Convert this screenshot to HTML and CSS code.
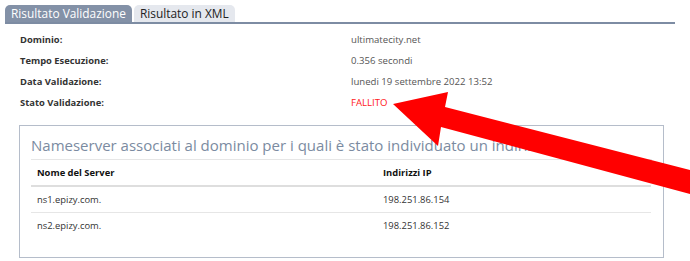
FILE: index.html
```html
<!DOCTYPE html>
<html lang="it">
<head>
<meta charset="utf-8">
<link rel="stylesheet" href="styles.css">
</head>
<body>
<div class="page">
  <div class="tabs">
    <div class="tab active">Risultato Validazione</div>
    <div class="tab">Risultato in XML</div>
  </div>
  <div class="info">
    <div class="label">Dominio:</div><div class="value">ultimatecity.net</div>
    <div class="label">Tempo Esecuzione:</div><div class="value">0.356 secondi</div>
    <div class="label">Data Validazione:</div><div class="value">lunedi 19 settembre 2022 13:52</div>
    <div class="label">Stato Validazione:</div><div class="value fail">FALLITO</div>
  </div>
  <div class="box">
    <h2 class="box-title">Nameserver associati al dominio per i quali è stato individuato un indirizzo IP</h2>
    <table class="ns">
      <thead><tr><th class="c1">Nome del Server</th><th>Indirizzi IP</th></tr></thead>
      <tbody>
        <tr><td class="c1">ns1.epizy.com.</td><td>198.251.86.154</td></tr>
        <tr><td class="c1">ns2.epizy.com.</td><td>198.251.86.152</td></tr>
      </tbody>
    </table>
  </div>
  <svg class="arrow" width="690" height="261" viewBox="0 0 690 261"><polygon points="393,104 448,92 445,107 690,170 690,194 441,127 438,146" fill="#ff0000"/></svg>
</div>
</body>
</html>
```
FILE: styles.css
```css
html, body { margin: 0; padding: 0; background: #fff; }
body { font-family: "Open Sans", "DejaVu Sans", sans-serif; color: #333; overflow: hidden; }
.page { position: relative; width: 690px; height: 261px; padding: 5px 0 0 0; box-sizing: border-box; }
.tabs { display: flex; gap: 2px; margin-left: 5px; width: 670px; border-bottom: 2px solid #7d8ca3; height: 17px; }
.tab { height: 17px; line-height: 17px; padding: 0 6px; font-size: 11.9px; border-radius: 5px 5px 0 0; background: #e5e8ee; color: #222; }
.tab.active { background: #8391a7; color: #fff; }
.info { display: grid; grid-template-columns: 331px auto; grid-auto-rows: 21px; margin: 5px 0 0 20px; align-items: center; font-size: 9.4px; }
.label { font-weight: 700; color: #333; }
.value { color: #555; font-size: 9.6px; }
.value.fail { color: #ff1a1a; }
.box { margin: 12px 0 0 19px; width: 645px; height: 133px; box-sizing: border-box; border: 1px solid #b5bdca; padding: 7px 11px 0 11px; }
.box-title { margin: 0; font-weight: 400; font-size: 15px; color: #7b8ba1; white-space: nowrap; overflow: hidden; line-height: 24px; padding-bottom: 2px; border-bottom: 1px solid #e6e6e6; }
.ns { width: 620px; border-collapse: collapse; font-size: 9.4px; }
.ns th, .ns td { text-align: left; padding: 0 6px; height: 25px; }
.ns th { font-weight: 700; color: #111; border-bottom: 2px solid #dedede; }
.ns td { color: #333; border-bottom: 1px solid #e6e6e6; }
.ns tbody tr:last-child td { border-bottom: none; }
.ns .c1 { width: 334px; }
.arrow { position: absolute; left: 0; top: 0; }
```
